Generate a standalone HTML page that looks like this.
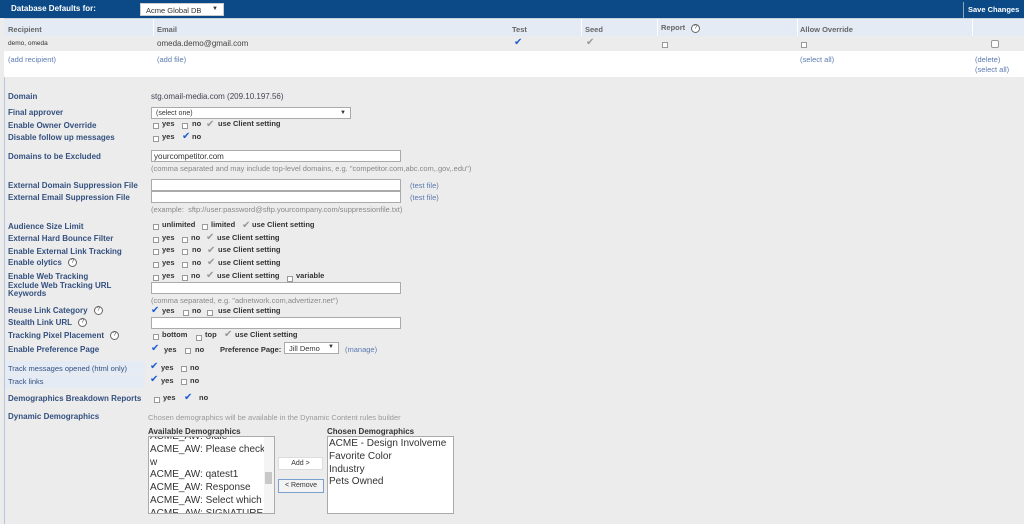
<!DOCTYPE html>
<html><head><meta charset="utf-8"><style>
*{margin:0;padding:0;box-sizing:border-box}
body{width:1024px;height:524px;overflow:hidden;background:#ececec;font-family:"Liberation Sans",sans-serif;font-size:8px;position:relative;color:#333}
.a{position:absolute;white-space:nowrap}
.l{position:absolute;left:8px;font-weight:bold;color:#34507f;font-size:8px;white-space:nowrap}
.o{position:absolute;font-weight:bold;color:#333;font-size:7.5px;white-space:nowrap}
.b{position:absolute;width:6px;height:6px;border:1px solid #999;background:#fff}
.c{position:absolute;color:#1d5fd1;font-size:10px;line-height:10px}
.g{position:absolute;color:#999;font-size:10px;line-height:10px}
.lk{position:absolute;color:#5a7ab0;font-size:7.5px;white-space:nowrap}
.h{position:absolute;color:#888;font-size:7.5px;white-space:nowrap}
.in{position:absolute;background:#fff;border:1px solid #aaa;height:12px}
.q{display:inline-block;width:9px;height:9px;border:1px solid #666;border-radius:50%;font-size:6px;line-height:7px;text-align:center;color:#444;background:#fff;vertical-align:middle;margin-left:4px;font-weight:normal}
.lst{position:absolute;background:#fff;border:1px solid #aaa;font-size:10px;color:#333;line-height:12.8px;padding-left:1px;overflow:hidden}
</style></head><body>
<div class="a" style="left:0;top:0;width:1024px;height:18px;background:#0b4a86"></div>
<div class="a" style="left:11px;top:4px;color:#fff;font-weight:bold;font-size:8px">Database Defaults for:</div>
<div class="a" style="left:140px;top:3px;width:84px;height:13px;background:#fff;border:1px solid #ccc;font-size:7.5px;padding:2px 5px">Acme Global DB<span style="position:absolute;right:5px;font-size:6px">▼</span></div>
<div class="a" style="left:963px;top:2px;width:1px;height:16px;background:#8aa"></div>
<div class="a" style="left:968px;top:5px;color:#fff;font-weight:bold;font-size:7.5px">Save Changes</div>
<div class="a" style="left:4px;top:18px;width:1020px;height:18px;background:#e4ebf5;border-top:1px solid #c9d3e0"></div>
<div class="a" style="left:4px;top:36px;width:1020px;height:15px;background:#ececec"></div>
<div class="a" style="left:4px;top:51px;width:1020px;height:26px;background:#fff"></div>
<div class="a" style="left:153px;top:19px;width:1px;height:17px;background:#fff"></div>
<div class="a" style="left:581px;top:19px;width:1px;height:17px;background:#fff"></div>
<div class="a" style="left:657px;top:19px;width:1px;height:17px;background:#fff"></div>
<div class="a" style="left:797px;top:19px;width:1px;height:17px;background:#fff"></div>
<div class="a" style="left:972px;top:19px;width:1px;height:17px;background:#fff"></div>
<div class="a" style="left:8px;top:25px;font-weight:bold;color:#666;font-size:7.5px">Recipient</div>
<div class="a" style="left:157px;top:25px;font-weight:bold;color:#666;font-size:7.5px">Email</div>
<div class="a" style="left:512px;top:25px;font-weight:bold;color:#666;font-size:7.5px">Test</div>
<div class="a" style="left:585px;top:25px;font-weight:bold;color:#666;font-size:7.5px">Seed</div>
<div class="a" style="left:661px;top:23px;font-weight:bold;color:#666;font-size:7.5px">Report <span class="q">?</span></div>
<div class="a" style="left:800px;top:25px;font-weight:bold;color:#666;font-size:7.5px">Allow Override</div>
<div class="a" style="left:8px;top:40px;font-size:6.5px">demo, omeda</div>
<div class="a" style="left:157px;top:39px;font-size:8px;color:#444">omeda.demo@gmail.com</div>
<div class="c" style="left:514px;top:38px">✔</div>
<div class="g" style="left:586px;top:38px">✔</div>
<div class="b" style="left:662px;top:42px"></div>
<div class="b" style="left:801px;top:42px"></div>
<div class="b" style="left:991px;top:40px;width:8px;height:8px;border-radius:2px"></div>
<div class="lk" style="left:8px;top:55px">(add recipient)</div>
<div class="lk" style="left:157px;top:55px">(add file)</div>
<div class="lk" style="left:800px;top:55px">(select all)</div>
<div class="lk" style="left:975px;top:55px">(delete)</div>
<div class="lk" style="left:975px;top:65px">(select all)</div>
<div class="a" style="left:4px;top:77px;width:1px;height:447px;background:#b7c6dc"></div>

<div class="l" style="top:92px">Domain</div><div class="a" style="left:151px;top:92px;color:#445;font-size:8px">stg.omail-media.com (209.10.197.56)</div>
<div class="l" style="top:108px">Final approver</div>
<div class="in" style="left:151px;top:107px;width:200px;font-size:7px;padding:2px 4px">(select one)<span style="position:absolute;right:4px;font-size:6px">▼</span></div>
<div class="l" style="top:121px">Enable Owner Override</div>
<div class="b" style="left:153px;top:123px"></div><div class="o" style="left:162px;top:119px">yes</div><div class="b" style="left:182px;top:123px"></div><div class="o" style="left:192px;top:119px">no</div><div class="g" style="left:206px;top:120px">✔</div><div class="o" style="left:218px;top:119px">use Client setting</div>
<div class="l" style="top:133px">Disable follow up messages</div>
<div class="b" style="left:153px;top:136px"></div><div class="o" style="left:162px;top:132px">yes</div><div class="c" style="left:182px;top:132px">✔</div><div class="o" style="left:192px;top:132px">no</div>
<div class="l" style="top:152px">Domains to be Excluded</div>
<div class="in" style="left:151px;top:150px;width:250px;font-size:8px;padding:1px 2px">yourcompetitor.com</div>
<div class="h" style="left:151px;top:164px">(comma separated and may include top-level domains, e.g. "competitor.com,abc.com,.gov,.edu")</div>
<div class="l" style="top:181px">External Domain Suppression File</div><div class="in" style="left:151px;top:179px;width:250px"></div><div class="lk" style="left:410px;top:181px">(test file)</div>
<div class="l" style="top:193px">External Email Suppression File</div><div class="in" style="left:151px;top:191px;width:250px"></div><div class="lk" style="left:410px;top:193px">(test file)</div>
<div class="h" style="left:151px;top:205px">(example:&nbsp; sftp://user:password@sftp.yourcompany.com/suppressionfile.txt)</div>

<div class="l" style="top:222px">Audience Size Limit</div>
<div class="b" style="left:153px;top:224px"></div><div class="o" style="left:162px;top:220px">unlimited</div><div class="b" style="left:202px;top:224px"></div><div class="o" style="left:211px;top:220px">limited</div><div class="g" style="left:242px;top:221px">✔</div><div class="o" style="left:252px;top:220px">use Client setting</div>
<div class="l" style="top:234px">External Hard Bounce Filter</div>
<div class="b" style="left:153px;top:237px"></div><div class="o" style="left:162px;top:233px">yes</div><div class="b" style="left:182px;top:237px"></div><div class="o" style="left:191px;top:233px">no</div><div class="g" style="left:206px;top:233px">✔</div><div class="o" style="left:217px;top:233px">use Client setting</div>
<div class="l" style="top:247px">Enable External Link Tracking</div>
<div class="b" style="left:153px;top:249px"></div><div class="o" style="left:162px;top:245px">yes</div><div class="b" style="left:182px;top:249px"></div><div class="o" style="left:192px;top:245px">no</div><div class="g" style="left:207px;top:246px">✔</div><div class="o" style="left:218px;top:245px">use Client setting</div>
<div class="l" style="top:258px">Enable olytics <span class="q">?</span></div>
<div class="b" style="left:153px;top:262px"></div><div class="o" style="left:162px;top:258px">yes</div><div class="b" style="left:182px;top:262px"></div><div class="o" style="left:192px;top:258px">no</div><div class="g" style="left:207px;top:258px">✔</div><div class="o" style="left:218px;top:258px">use Client setting</div>
<div class="l" style="top:272px">Enable Web Tracking</div>
<div class="b" style="left:153px;top:275px"></div><div class="o" style="left:162px;top:271px">yes</div><div class="b" style="left:182px;top:275px"></div><div class="o" style="left:191px;top:271px">no</div><div class="g" style="left:206px;top:271px">✔</div><div class="o" style="left:217px;top:271px">use Client setting</div><div class="b" style="left:287px;top:276px"></div><div class="o" style="left:296px;top:271px">variable</div>
<div class="l" style="top:282px;line-height:8px">Exclude Web Tracking URL<br>Keywords</div>
<div class="in" style="left:151px;top:282px;width:250px"></div>
<div class="h" style="left:151px;top:296px">(comma separated, e.g. "adnetwork.com,advertizer.net")</div>
<div class="l" style="top:306px">Reuse Link Category <span class="q">?</span></div>
<div class="c" style="left:151px;top:306px">✔</div><div class="o" style="left:162px;top:306px">yes</div><div class="b" style="left:183px;top:310px"></div><div class="o" style="left:192px;top:306px">no</div><div class="b" style="left:207px;top:310px"></div><div class="o" style="left:218px;top:306px">use Client setting</div>
<div class="l" style="top:318px">Stealth Link URL <span class="q">?</span></div>
<div class="in" style="left:151px;top:317px;width:250px"></div>
<div class="l" style="top:331px">Tracking Pixel Placement <span class="q">?</span></div>
<div class="b" style="left:153px;top:334px"></div><div class="o" style="left:162px;top:330px">bottom</div><div class="b" style="left:196px;top:335px"></div><div class="o" style="left:205px;top:330px">top</div><div class="g" style="left:224px;top:330px">✔</div><div class="o" style="left:235px;top:330px">use Client setting</div>
<div class="l" style="top:345px">Enable Preference Page</div>
<div class="c" style="left:151px;top:344px">✔</div><div class="o" style="left:164px;top:345px">yes</div><div class="b" style="left:185px;top:348px"></div><div class="o" style="left:195px;top:345px">no</div>
<div class="o" style="left:220px;top:345px">Preference Page:</div>
<div class="in" style="left:284px;top:342px;width:55px;font-size:7.5px;padding:1px 4px;font-weight:normal">Jill Demo<span style="position:absolute;right:4px;font-size:6px">▼</span></div>
<div class="lk" style="left:345px;top:345px">(manage)</div>

<div class="a" style="left:5px;top:361px;width:140px;height:13px;background:#e4ebf5"></div>
<div class="a" style="left:8px;top:364px;color:#34507f;font-size:7.5px">Track messages opened (html only)</div>
<div class="c" style="left:150px;top:362px">✔</div><div class="o" style="left:161px;top:363px">yes</div><div class="b" style="left:181px;top:366px"></div><div class="o" style="left:190px;top:363px">no</div>
<div class="a" style="left:5px;top:375px;width:140px;height:13px;background:#e4ebf5"></div>
<div class="a" style="left:8px;top:377px;color:#34507f;font-size:7.5px">Track links</div>
<div class="c" style="left:150px;top:375px">✔</div><div class="o" style="left:161px;top:376px">yes</div><div class="b" style="left:181px;top:379px"></div><div class="o" style="left:190px;top:376px">no</div>
<div class="l" style="top:394px">Demographics Breakdown Reports</div>
<div class="b" style="left:154px;top:397px"></div><div class="o" style="left:163px;top:393px">yes</div><div class="c" style="left:184px;top:393px">✔</div><div class="o" style="left:199px;top:393px">no</div>
<div class="l" style="top:412px">Dynamic Demographics</div>
<div class="h" style="left:148px;top:413px;color:#999">Chosen demographics will be available in the Dynamic Content rules builder</div>
<div class="a" style="left:148px;top:427px;font-weight:bold;font-size:8px">Available Demographics</div>
<div class="a" style="left:327px;top:427px;font-weight:bold;font-size:8px">Chosen Demographics</div>
<div class="lst" style="left:148px;top:436px;width:127px;height:78px;line-height:12.8px"><div style="margin-top:-6px">ACME_AW: ofale<br>ACME_AW: Please check w<br>ACME_AW: qatest1<br>ACME_AW: Response<br>ACME_AW: Select which s<br>ACME_AW: SIGNATURE<br>ACME_AW: Test Version</div>
<div style="position:absolute;right:0;top:0;width:10px;height:100%;background:#f4f4f4"></div><div style="position:absolute;right:2px;top:35px;width:7px;height:12px;background:#c8c8c8"></div></div>
<div class="lst" style="left:327px;top:436px;width:127px;height:78px"><div style="margin-top:1px">ACME - Design Involveme<br>Favorite Color<br>Industry<br>Pets Owned</div></div>
<div class="a" style="left:278px;top:457px;width:45px;height:13px;background:#fff;border:1px solid #ddd;font-size:7px;text-align:center;line-height:11px">Add &gt;</div>
<div class="a" style="left:278px;top:479px;width:46px;height:14px;background:#f3f3f3;border:1px solid #7aa0d0;font-size:7px;text-align:center;line-height:12px">&lt; Remove</div>
</body></html>
